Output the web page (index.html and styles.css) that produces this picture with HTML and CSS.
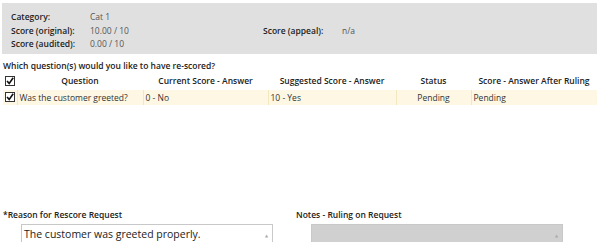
FILE: index.html
```html
<!DOCTYPE html>
<html lang="en">
<head>
    <meta charset="UTF-8">
    <title>Rescore Request</title>
    <link rel="stylesheet" href="styles.css">
</head>
<body>
    <div class="summary">
        <span class="label">Category:</span><span class="value">Cat 1</span><span></span><span></span>
        <span class="label">Score (original):</span><span class="value">10.00 / 10</span><span class="label">Score (appeal):</span><span class="value">n/a</span>
        <span class="label">Score (audited):</span><span class="value">0.00 / 10</span><span></span><span></span>
    </div>

    <h3 class="prompt">Which question(s) would you like to have re-scored?</h3>
    <table class="questions">
        <thead>
            <tr>
                <th class="col-check"><svg class="check" viewBox="0 0 10 10"><rect x="0.5" y="0.5" width="9" height="9" fill="#fff" stroke="#333"/><path d="M2 5 L4.2 7.4 L8.2 1.8" fill="none" stroke="#111" stroke-width="1.6"/></svg></th>
                <th class="col-q">Question</th>
                <th class="col-cur">Current Score - Answer</th>
                <th class="col-sug">Suggested Score - Answer</th>
                <th class="col-status">Status</th>
                <th class="col-ruling">Score - Answer After Ruling</th>
            </tr>
        </thead>
        <tbody>
            <tr>
                <td class="col-check"><svg class="check" viewBox="0 0 10 10"><rect x="0.5" y="0.5" width="9" height="9" fill="#fff" stroke="#333"/><path d="M2 5 L4.2 7.4 L8.2 1.8" fill="none" stroke="#111" stroke-width="1.6"/></svg></td>
                <td>Was the customer greeted?</td>
                <td>0 - No</td>
                <td>10 - Yes</td>
                <td class="center">Pending</td>
                <td>Pending</td>
            </tr>
        </tbody>
    </table>

    <div class="notes">
        <div class="note-col">
            <div class="note-label">*Reason for Rescore Request</div>
            <div class="box reason">The customer was greeted properly.<span class="arrow">&#9650;</span></div>
        </div>
        <div class="note-col">
            <div class="note-label">Notes - Ruling on Request</div>
            <div class="box ruling"><span class="arrow">&#9650;</span></div>
        </div>
    </div>
</body>
</html>
```

FILE: styles.css
```css
body {
    margin: 0;
    font-family: 'Open Sans', 'DejaVu Sans', sans-serif;
    font-size: 8.5px;
    color: #333;
    background: #fff;
}
.summary {
    display: grid;
    grid-template-columns: 79px 173px 79px 1fr;
    row-gap: 2px;
    background: #e0e0e0;
    margin: 3px 3px 0 2px;
    padding: 8px 9px 4px 9px;
    line-height: 11.5px;
}
.summary .label {
    font-weight: 600;
    color: #222;
}
.summary .value {
    color: #555;
}
.prompt {
    font-size: 8.5px;
    font-weight: 600;
    color: #222;
    margin: 6px 3px 3px 3px;
    line-height: 11px;
}
.questions {
    width: 594px;
    margin: 0 3px;
    border-collapse: collapse;
    table-layout: fixed;
}
.questions th {
    font-weight: 600;
    color: #222;
    text-align: center;
    vertical-align: top;
    height: 16px;
    line-height: 14px;
    padding: 0;
}
.questions th .check {
    margin-top: 2px;
}
.questions td {
    background: #fdf7e3;
    border-left: 1px solid #f3e7bf;
    color: #333;
    height: 15px;
    padding: 0 2px;
    white-space: nowrap;
}
.questions td.col-check {
    border-left: none;
    padding: 0 0 0 2px;
}
.questions .center {
    text-align: center;
}
.col-check { width: 14px; }
.col-q { width: 126px; }
.col-cur { width: 125px; }
.col-sug { width: 128px; }
.col-status { width: 75px; }
.check {
    display: block;
    width: 10px;
    height: 10px;
}
th .check {
    margin-left: 2px;
}
.notes {
    display: grid;
    grid-template-columns: 293px 1fr;
    margin: 104px 3px 0 3px;
}
.note-label {
    font-weight: 600;
    color: #222;
    line-height: 11px;
    margin-bottom: 4px;
}
.box {
    position: relative;
    height: 30px;
    width: 246px;
    margin-left: 18px;
    border: 1px solid #c8c8c8;
    font-size: 10.5px;
    color: #222;
    padding: 2px 2px;
    line-height: 14px;
}
.ruling {
    margin-left: 15px;
    background: #d0d0d0;
}
.arrow {
    position: absolute;
    right: 4px;
    top: 8px;
    font-size: 4px;
    line-height: 5px;
    color: #aaa;
}
```
